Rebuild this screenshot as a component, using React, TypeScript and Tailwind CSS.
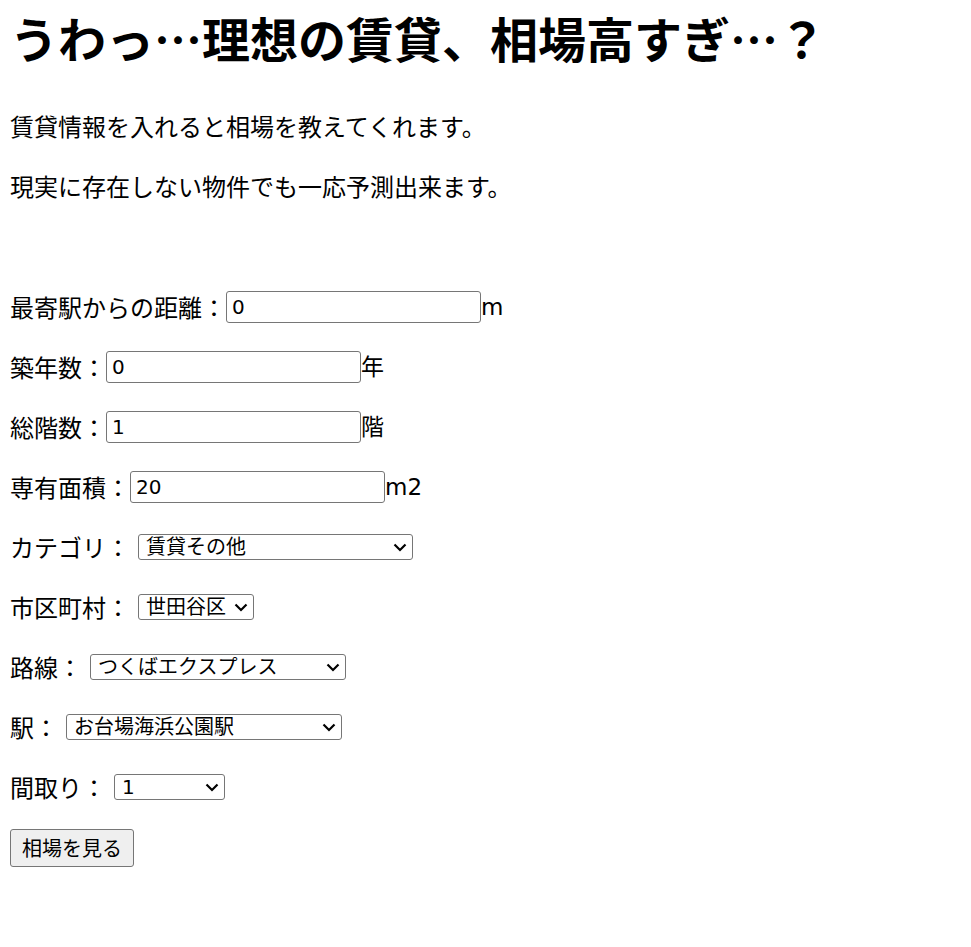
import * as React from "react";

/* ================= FIELDS ================= */

const jp = { fontFamily: '"Noto Sans CJK JP", "Noto Sans", sans-serif' };
const latin = { fontFamily: '"DejaVu Sans", "Noto Sans CJK JP", sans-serif' };

function TextRow({ label, value, unit }: { label: string; value: string; unit: string }) {
  return (
    <div className="flex items-center h-[36px] mt-[24px] text-[24px]">
      <span>{label}</span>
      <input
        defaultValue={value}
        className="w-[255px] h-[32px] border border-[#767676] rounded-[3px] px-[5px] text-[20px] text-black bg-white outline-none"
        style={latin}
      />
      <span className="text-[23px]" style={latin}>
        {unit}
      </span>
    </div>
  );
}

function SelectRow({ label, value, width }: { label: string; value: string; width: string }) {
  return (
    <div className="flex items-center h-[36px] mt-[24px] text-[24px]">
      <span>{label}</span>
      <div className={`relative ml-[8px] ${width}`}>
        <select
          defaultValue={value}
          className="block appearance-none w-full h-[26px] border border-[#767676] rounded-[3px] pl-[7px] pr-[24px] text-[20px] leading-[24px] text-black bg-white outline-none"
          style={latin}
        >
          <option>{value}</option>
        </select>
        <svg
          className="absolute right-[6px] top-[9px] pointer-events-none"
          width="14"
          height="9"
          viewBox="0 0 14 9"
        >
          <path d="M1.5 1.5 L7 7 L12.5 1.5" fill="none" stroke="#000" strokeWidth="2.2" />
        </svg>
      </div>
    </div>
  );
}

/* ================= APP ================= */

export default function App() {
  return (
    <div className="min-h-screen bg-white text-black px-[10px] pb-[40px]" style={jp}>
      <h1 className="pt-[9px] text-[48px] font-bold leading-[56px] whitespace-nowrap">
        うわっ…理想の賃貸、相場高すぎ…？
      </h1>

      <p className="mt-[43px] text-[24px] leading-[36px]">賃貸情報を入れると相場を教えてくれます。</p>
      <p className="mt-[24px] text-[24px] leading-[36px]">現実に存在しない物件でも一応予測出来ます。</p>

      <div className="mt-[85px]">
        <TextRow label="最寄駅からの距離：" value="0" unit="m" />
        <TextRow label="築年数：" value="0" unit="年" />
        <TextRow label="総階数：" value="1" unit="階" />
        <TextRow label="専有面積：" value="20" unit="m2" />
        <SelectRow label="カテゴリ：" value="賃貸その他" width="w-[275px]" />
        <SelectRow label="市区町村：" value="世田谷区" width="w-[116px]" />
        <SelectRow label="路線：" value="つくばエクスプレス" width="w-[256px]" />
        <SelectRow label="駅：" value="お台場海浜公園駅" width="w-[276px]" />
        <SelectRow label="間取り：" value="1" width="w-[111px]" />
      </div>

      <div className="mt-[24px]">
        <button
          className="h-[38px] w-[124px] border border-[#767676] rounded-[3px] bg-[#efefef] text-[20px] text-black"
          style={jp}
        >
          相場を見る
        </button>
      </div>
    </div>
  );
}
